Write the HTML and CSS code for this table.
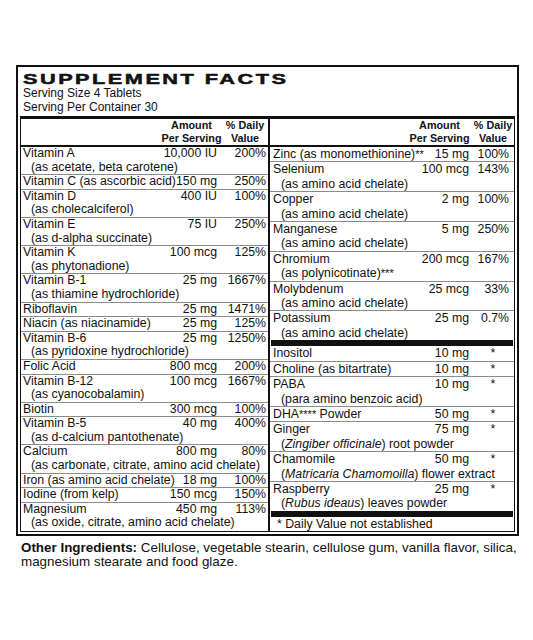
FILE: index.html
```html
<!DOCTYPE html>
<html lang="en">
<head>
    <meta charset="UTF-8">
    <meta name="viewport" content="width=device-width, initial-scale=1.0">
    <title>Supplement Facts</title>
    <link rel="stylesheet" href="styles.css">
</head>
<body>
    <div class="page">
        <div class="label">
            <h1 class="title">SUPPLEMENT FACTS</h1>
            <div class="serving">
                Serving Size 4 Tablets<br>
                Serving Per Container 30
            </div>

            <div class="facts">
                <!-- colonne gauche : vitamines -->
                <div class="col col-left">
                    <div class="row head"><span></span><span class="amt">Amount<br>Per Serving</span><span class="dv">% Daily<br>Value</span></div>
                    <div class="row"><span class="name">Vitamin A</span><span class="amt">10,000 IU</span><span class="dv">200%</span><span class="sub">(as acetate, beta carotene)</span></div>
                    <div class="row"><span class="name">Vitamin C (as ascorbic acid)</span><span class="amt">150 mg</span><span class="dv">250%</span></div>
                    <div class="row"><span class="name">Vitamin D</span><span class="amt">400 IU</span><span class="dv">100%</span><span class="sub">(as cholecalciferol)</span></div>
                    <div class="row"><span class="name">Vitamin E</span><span class="amt">75 IU</span><span class="dv">250%</span><span class="sub">(as d-alpha succinate)</span></div>
                    <div class="row"><span class="name">Vitamin K</span><span class="amt">100 mcg</span><span class="dv">125%</span><span class="sub">(as phytonadione)</span></div>
                    <div class="row"><span class="name">Vitamin B-1</span><span class="amt">25 mg</span><span class="dv">1667%</span><span class="sub">(as thiamine hydrochloride)</span></div>
                    <div class="row"><span class="name">Riboflavin</span><span class="amt">25 mg</span><span class="dv">1471%</span></div>
                    <div class="row"><span class="name">Niacin (as niacinamide)</span><span class="amt">25 mg</span><span class="dv">125%</span></div>
                    <div class="row"><span class="name">Vitamin B-6</span><span class="amt">25 mg</span><span class="dv">1250%</span><span class="sub">(as pyridoxine hydrochloride)</span></div>
                    <div class="row"><span class="name">Folic Acid</span><span class="amt">800 mcg</span><span class="dv">200%</span></div>
                    <div class="row"><span class="name">Vitamin B-12</span><span class="amt">100 mcg</span><span class="dv">1667%</span><span class="sub">(as cyanocobalamin)</span></div>
                    <div class="row"><span class="name">Biotin</span><span class="amt">300 mcg</span><span class="dv">100%</span></div>
                    <div class="row"><span class="name">Vitamin B-5</span><span class="amt">40 mg</span><span class="dv">400%</span><span class="sub">(as d-calcium pantothenate)</span></div>
                    <div class="row"><span class="name">Calcium</span><span class="amt">800 mg</span><span class="dv">80%</span><span class="sub">(as carbonate, citrate, amino acid chelate)</span></div>
                    <div class="row"><span class="name">Iron (as amino acid chelate)</span><span class="amt">18 mg</span><span class="dv">100%</span></div>
                    <div class="row"><span class="name">Iodine (from kelp)</span><span class="amt">150 mcg</span><span class="dv">150%</span></div>
                    <div class="row"><span class="name">Magnesium</span><span class="amt">450 mg</span><span class="dv">113%</span><span class="sub">(as oxide, citrate, amino acid chelate)</span></div>
                </div>

                <!-- colonne droite : minéraux + autres -->
                <div class="col col-right">
                    <div class="row head"><span></span><span class="amt">Amount<br>Per Serving</span><span class="dv">% Daily<br>Value</span></div>
                    <div class="row"><span class="name">Zinc (as monomethionine)<span class="ast">**</span></span><span class="amt">15 mg</span><span class="dv">100%</span></div>
                    <div class="row"><span class="name">Selenium</span><span class="amt">100 mcg</span><span class="dv">143%</span><span class="sub">(as amino acid chelate)</span></div>
                    <div class="row"><span class="name">Copper</span><span class="amt">2 mg</span><span class="dv">100%</span><span class="sub">(as amino acid chelate)</span></div>
                    <div class="row"><span class="name">Manganese</span><span class="amt">5 mg</span><span class="dv">250%</span><span class="sub">(as amino acid chelate)</span></div>
                    <div class="row"><span class="name">Chromium</span><span class="amt">200 mcg</span><span class="dv">167%</span><span class="sub">(as polynicotinate)<span class="ast">***</span></span></div>
                    <div class="row"><span class="name">Molybdenum</span><span class="amt">25 mcg</span><span class="dv">33%</span><span class="sub">(as amino acid chelate)</span></div>
                    <div class="row last"><span class="name">Potassium</span><span class="amt">25 mg</span><span class="dv">0.7%</span><span class="sub">(as amino acid chelate)</span></div>
                    <div class="bar"></div>
                    <div class="row"><span class="name">Inositol</span><span class="amt">10 mg</span><span class="dv star">*</span></div>
                    <div class="row"><span class="name">Choline (as bitartrate)</span><span class="amt">10 mg</span><span class="dv star">*</span></div>
                    <div class="row"><span class="name">PABA</span><span class="amt">10 mg</span><span class="dv star">*</span><span class="sub">(para amino benzoic acid)</span></div>
                    <div class="row"><span class="name">DHA<span class="ast">****</span> Powder</span><span class="amt">50 mg</span><span class="dv star">*</span></div>
                    <div class="row"><span class="name">Ginger</span><span class="amt">75 mg</span><span class="dv star">*</span><span class="sub">(<i>Zingiber officinale</i>) root powder</span></div>
                    <div class="row"><span class="name">Chamomile</span><span class="amt">50 mg</span><span class="dv star">*</span><span class="sub">(<i>Matricaria Chamomoilla</i>) flower extract</span></div>
                    <div class="row last"><span class="name">Raspberry</span><span class="amt">25 mg</span><span class="dv star">*</span><span class="sub">(<i>Rubus ideaus</i>) leaves powder</span></div>
                    <div class="bar"></div>
                    <div class="note">* Daily Value not established</div>
                </div>
            </div>
        </div>

        <p class="other"><b>Other Ingredients:</b> Cellulose, vegetable stearin, cellulose gum, vanilla flavor, silica,<br>magnesium stearate and food glaze.</p>
    </div>
</body>
</html>
```

FILE: styles.css
```css
body {
    margin: 0;
    background: #fff;
    font-family: "Liberation Sans", Arial, sans-serif;
    color: #111;
}
.page {
    padding: 65px 0 0 16px;
}
.label {
    width: 503px;
    box-sizing: border-box;
    border: 2px solid #111;
    padding: 4px 2px 2px 2px;
}
.title {
    width: max-content;
    margin: 0 0 0 3px;
    font-size: 15px;
    line-height: 15px;
    font-weight: bold;
    letter-spacing: 1.7px;
    -webkit-text-stroke: 0.5px #111;
    transform: scaleX(1.45);
    transform-origin: left center;
}
.serving {
    font-size: 12px;
    line-height: 14px;
    padding-left: 3px;
    margin-bottom: 2px;
}
.facts {
    display: grid;
    grid-template-columns: 249px 1fr;
    border: 1px solid #111;
    border-top: 3px solid #111;
}
.col {
    display: flex;
    flex-direction: column;
}
.col-left {
    box-sizing: border-box;
    border-right: 2px solid #111;
    padding: 0 0 0 2px;
    line-height: 13.6px;
}
.col-right {
    padding: 0 1px 0 3px;
    line-height: 14.4px;
}
.row {
    display: grid;
    font-size: 12.3px;
    border-bottom: 1px solid #8c8c8c;
    margin-left: -2px;
    padding-left: 2px;
}
.col-left .row {
    grid-template-columns: minmax(0, 1fr) 61px 46px;
}
.col-right .row {
    grid-template-columns: minmax(0, 1fr) 67px 40px;
    margin-left: -3px;
    margin-right: -1px;
    padding-left: 3px;
    padding-right: 1px;
}
.col-left .row:last-child,
.row.last {
    border-bottom: none;
}
.row.head {
    font-size: 10.8px;
    font-weight: bold;
    line-height: 13px;
    border-bottom: 2px solid #111;
    text-align: center;
}
.row.head .amt,
.row.head .dv {
    text-align: center;
    padding: 0;
}
.name {
    white-space: nowrap;
}
.amt {
    text-align: right;
    padding-right: 5px;
    white-space: nowrap;
}
.col-right .amt {
    padding-right: 4px;
}
.dv {
    text-align: right;
    padding-right: 2px;
    white-space: nowrap;
}
.col-right .dv {
    padding-right: 4px;
}
.dv.star {
    text-align: center;
    padding-right: 0;
}
.sub {
    grid-column: 1 / -1;
    padding-left: 8px;
    white-space: nowrap;
}
.ast {
    font-size: 0.9em;
}
.bar {
    height: 6px;
    background: #111;
    margin-left: -2px;
}
.note {
    font-size: 12.3px;
    padding-left: 4px;
}
.other {
    width: 505px;
    margin: 5px 0 0 5px;
    font-size: 13.4px;
    line-height: 14px;
}
```
